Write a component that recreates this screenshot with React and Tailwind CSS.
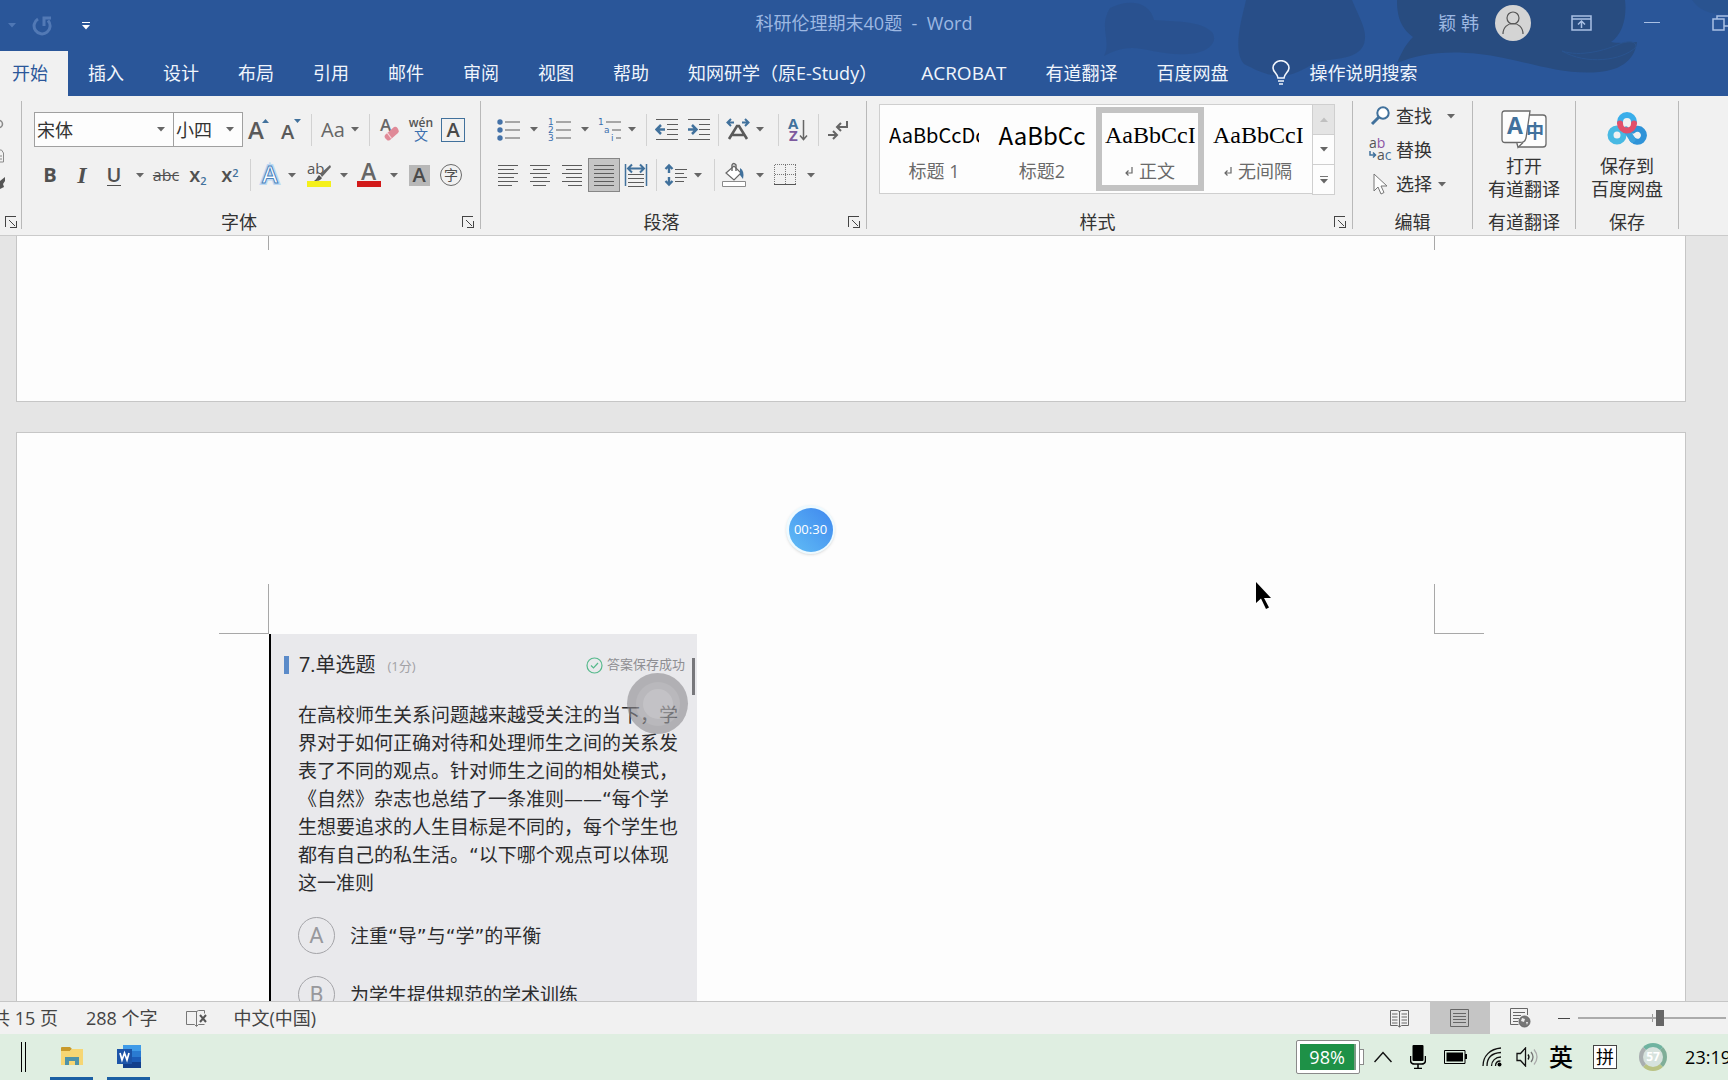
import { useState } from "react";

const tabs = [
  { label: "插入" },
  { label: "设计" },
  { label: "布局" },
  { label: "引用" },
  { label: "邮件" },
  { label: "审阅" },
  { label: "视图" },
  { label: "帮助" },
  { label: "知网研学（原E-Study）", className: "pl-[19px] pr-6" },
  { label: "ACROBAT", className: "px-[19px] text-[19px]" },
  { label: "有道翻译" },
  { label: "百度网盘" },
];

const styles = [
  { name: "标题 1", sample: "AaBbCcDc", look: "font-['Noto_Sans_CJK_SC',sans-serif] text-xl" },
  { name: "标题2", sample: "AaBbCc", look: "font-['Noto_Sans_CJK_SC',sans-serif] text-2xl" },
  { name: "正文", sample: "AaBbCcI", look: "font-['Liberation_Serif',serif] text-2xl", mark: true },
  { name: "无间隔", sample: "AaBbCcI", look: "font-['Liberation_Serif',serif] text-2xl", mark: true },
];

const question = [
  "在高校师生关系问题越来越受关注的当下，学",
  "界对于如何正确对待和处理师生之间的关系发",
  "表了不同的观点。针对师生之间的相处模式，",
  "《自然》杂志也总结了一条准则——“每个学",
  "生想要追求的人生目标是不同的，每个学生也",
  "都有自己的私生活。“以下哪个观点可以体现",
  "这一准则",
];

const options = [
  { key: "A", text: "注重“导”与“学”的平衡" },
  { key: "B", text: "为学生提供规范的学术训练" },
];

const Caret = ({ className = "text-[#666]" }) => (
  <svg width="8" height="5" viewBox="0 0 8 5" className={`shrink-0 ${className}`}>
    <path d="M0 0h8L4 4.5z" fill="currentColor" />
  </svg>
);

const Sep = () => (
  <span className="flex w-2 h-8 justify-center shrink-0">
    <span className="w-px h-full bg-[#d2d2d2]" />
  </span>
);

const Tool = ({ label, active, children }) => (
  <button
    type="button"
    aria-label={label}
    className={`flex w-8 h-[34px] shrink-0 items-center justify-center ${
      active ? "border border-[#868686] bg-[#c5c5c5]" : ""
    }`}
  >
    {children}
  </button>
);

// the arrow hugs its icon unless another cell layout is passed
const Drop = ({ label, className = "w-[18px] pl-0.5" }) => (
  <button type="button" aria-label={label} className={`flex h-[34px] shrink-0 items-center ${className}`}>
    <Caret />
  </button>
);

const Launcher = ({ label }) => (
  <button type="button" aria-label={label} className="flex w-6 h-6 shrink-0 items-center justify-center">
    <svg width="12" height="12" viewBox="0 0 12 12" fill="none" stroke="#444" shapeRendering="crispEdges">
      <path d="M.5 11V.5H11" />
      <path d="M4 4l6 6M11.5 5v6.500H5" />
    </svg>
  </button>
);

const Group = ({ name, launcher, className = "", bodyClassName = "", children }) => (
  <section className={`flex flex-col shrink-0 h-[139px] ${className}`}>
    <div className={`flex-1 ${bodyClassName}`}>{children}</div>
    <div className="flex h-[27px] items-center">
      <h2 className="flex-1 text-center text-lg leading-6 text-[#333]">{name}</h2>
      {launcher && <Launcher label={`${name}设置`} />}
    </div>
  </section>
);

const Divider = () => <span className="w-px h-32 mt-[5px] bg-[#b9b9b9] shrink-0" />;

const Lines = ({ rows }) => (
  <svg width="22" height="24" viewBox="0 0 22 24" stroke="#5c5c5c" strokeWidth="1" shapeRendering="crispEdges">
    {rows.map(([a, b], i) => (
      <path key={i} d={`M${a} ${i * 4 + 2.5}H${b}`} />
    ))}
  </svg>
);

const Combo = ({ label, value, className }) => (
  <label className={`flex h-[35px] items-center bg-[#fdfdfd] border border-[#a0a0a0] pr-2 shrink-0 ${className}`}>
    <span className="sr-only">{label}</span>
    <select
      defaultValue={value}
      className="appearance-none flex-1 min-w-0 h-full pl-0.5 text-lg leading-8 text-[#333] bg-transparent outline-none"
    >
      <option>{value}</option>
    </select>
    <Caret />
  </label>
);

const HeaderArt = () => (
  <svg
    className="absolute right-0 top-0 pointer-events-none"
    width="648"
    height="96"
    viewBox="0 0 648 96"
    fill="#284c80"
  >
    <path d="M30 8C50-2 70 2 74 20c20 2 45 0 58 12 8 12-8 22-24 22-22 2-42-6-56-6-12 0-20 4-28 8 8-16-6-28 6-48z" opacity=".4" />
    <path d="M166 0h106c8 20 16 30 12 44-6 16-30 14-46 18-10 4-20 12-34 14-18 0-28-6-40-12-12-14-2-46 2-64z" opacity=".7" />
    <path d="M317 0h228c2 16-2 34-14 42 12 2 20 0 26 0-2 16-14 28-38 30-40 4-80-14-120-18-34-4-60 0-82 9 6-14 10-20 16-26-14-10-16-24-16-37z" />
    <path d="M482 51c18 6 42 0 60-8 8-2 14-2 14 4-14 14-50 18-74 4z" fill="#284c80" stroke="#2a548f" />
    <path d="M612 0h36v14c-14 2-30-4-36-14z" opacity=".35" />
  </svg>
);

const TitleBar = () => (
  <div className="relative grid grid-cols-[1fr_auto_1fr] h-[51px] items-center text-lg text-[#9db8e2]">
    <div className="flex items-center pl-2">
      <Caret className="text-[#4f77b4]" />
      <button type="button" aria-label="重复" className="ml-4">
        <svg width="20" height="20" viewBox="0 0 20 20" fill="none" stroke="#5279b5" strokeWidth="3">
          <path d="M6 3a8 8 0 1 0 10 1.500" />
          <path d="M12 10V2h7" />
        </svg>
      </button>
      <button type="button" aria-label="自定义快速访问工具栏" className="ml-[30px] flex flex-col items-center gap-0.5">
        <span className="w-2 h-px bg-white" />
        <Caret className="text-white" />
      </button>
    </div>
    <h1 className="whitespace-pre leading-6 -mt-1.5">科研伦理期末40题  -  Word</h1>
    <div className="flex items-center justify-end -mt-1.5 -mr-1 overflow-hidden">
      <span className="leading-6">颖 韩</span>
      <svg className="ml-4" width="36" height="36" viewBox="0 0 36 36">
        <circle cx="18" cy="18" r="18" fill="#d4d4d4" />
        <circle cx="18" cy="13" r="6" fill="none" stroke="#555" strokeWidth="1.200" />
        <path d="M8 29c0-14 20-14 20 0" fill="none" stroke="#555" strokeWidth="1.200" />
      </svg>
      <button type="button" aria-label="功能区显示选项" className="ml-10">
        <svg width="22" height="16" viewBox="0 0 22 16" fill="none" stroke="#a9c0e4" strokeWidth="1.500">
          <path d="M1 1h19v14H1zM1 4h19M10.500 13V6M7 9.500L10.500 6l3.500 3.500" />
        </svg>
      </button>
      <button type="button" aria-label="最小化" className="ml-[51px] w-4 h-4 flex items-center">
        <span className="w-full h-px bg-[#a9c0e4]" />
      </button>
      <button type="button" aria-label="向下还原" className="ml-[52px]">
        <svg width="20" height="16" viewBox="0 0 20 16" fill="none" stroke="#a9c0e4" strokeWidth="1.500">
          <path d="M1 4h11v11H1zM5 4V1h12v10h-5" />
        </svg>
      </button>
    </div>
  </div>
);

const TabBar = () => (
  <nav className="relative flex gap-px h-[45px] text-lg leading-6 text-[#f0f5fc] whitespace-nowrap">
    <button type="button" className="w-[68px] pl-3 pb-0.5 text-left bg-[#f1f1f1] text-[#2b579a]">
      开始
    </button>
    {tabs.map((t) => (
      <button type="button" key={t.label} className={`pb-0.5 ${t.className || "px-[19px]"}`}>
        {t.label}
      </button>
    ))}
    <button type="button" className="flex items-center gap-[19px] pl-6 pb-0.5">
      <svg width="18" height="25" viewBox="0 0 18 25" fill="none" stroke="#f0f5fc" strokeWidth="1.600">
        <path d="M6 18c0-4-5-6-5-10a8 7.300 0 0 1 16 0c0 4-5 6-5 10z" />
        <path d="M6 21h6M7 24h4" />
      </svg>
      操作说明搜索
    </button>
  </nav>
);

const ClipboardGroup = () => (
  <section className="flex flex-col w-[21px] h-[139px] shrink-0 overflow-hidden">
    <div className="flex-1 pt-5">
      <svg width="6" height="80" viewBox="0 0 6 80" fill="none" stroke="#8a8a8a">
        <circle cx="-1" cy="8" r="3.500" strokeWidth="1.500" />
        <path d="M0 34h1.500l2 3v9H0M0 40h2M0 43h2" />
        <path d="M0 65l5-4v4l-2 3 1 3-4 2z" fill="#555" stroke="none" />
      </svg>
    </div>
    <div className="flex h-[27px] items-center justify-center">
      <Launcher label="剪贴板设置" />
    </div>
  </section>
);

const FontGroup = () => (
  <Group name="字体" launcher className="w-[458px]" bodyClassName="pl-3">
    <div className="flex h-[35px] mt-4 items-center">
      <Combo label="字体" value="宋体" className="w-[140px]" />
      <Combo label="字号" value="小四" className="w-[70px] -ml-px" />
      <Tool label="增大字号">
        <svg width="24" height="26" viewBox="0 0 24 26">
          <text x="1" y="22" fontSize="24" fontWeight="600" fill="#5a5a5a" fontFamily="Open Sans">A</text>
          <path d="M15 6l3.500-4L22 6z" fill="#41719c" />
        </svg>
      </Tool>
      <Tool label="减小字号">
        <svg width="24" height="26" viewBox="0 0 24 26">
          <text x="2" y="22" fontSize="20" fontWeight="600" fill="#5a5a5a" fontFamily="Open Sans">A</text>
          <path d="M15 2l3.500 4L22 2z" fill="#41719c" />
        </svg>
      </Tool>
      <Sep />
      <button type="button" aria-label="更改大小写" className="flex w-[50px] items-center justify-center gap-1.5 text-xl text-[#666]">
        Aa
        <Caret />
      </button>
      <Sep />
      <Tool label="清除所有格式">
        <svg width="24" height="24" viewBox="0 0 24 24">
          <text x="3" y="13" fontSize="17" fontWeight="600" fill="#666" fontFamily="Open Sans">A</text>
          <path d="M8 17l9-8q2-1 3.500 1l1 2q1 1.500-.5 3l-8 7q-2 1-3 0l-2-2q-1-1.500 0-3z" fill="#e08a98" />
          <path d="M10 14.500l4.500 6" stroke="#f6d6da" strokeWidth="1.200" />
        </svg>
      </Tool>
      <Tool label="拼音指南">
        <span className="flex flex-col items-center text-[#555] text-xs leading-3">
          <span className="font-semibold leading-[10px]">wén</span>
          <span className="text-sm leading-[14px] text-[#3a6fae]">文</span>
        </span>
      </Tool>
      <Tool label="字符边框">
        <span className="flex w-6 h-6 items-center justify-center border border-[#41719c] text-xl font-semibold text-[#4a4a4a]">
          A
        </span>
      </Tool>
    </div>
    <div className="flex h-[34px] mt-[11px] items-center text-[#505050]">
      <Tool label="加粗">
        <b className="text-xl">B</b>
      </Tool>
      <Tool label="倾斜">
        <i className="font-['Liberation_Serif',serif] text-2xl font-bold">I</i>
      </Tool>
      <Tool label="下划线">
        <span className="text-xl font-semibold leading-5 border-b border-[#505050]">U</span>
      </Tool>
      <Drop label="下划线样式" className="w-5 justify-center" />
      <Tool label="删除线">
        <s className="text-base">abc</s>
      </Tool>
      <Tool label="下标">
        <span className="text-xl leading-6 font-semibold">
          x<sub className="text-[11px] text-[#41719c]">2</sub>
        </span>
      </Tool>
      <Tool label="上标">
        <span className="text-xl leading-6 font-semibold">
          x<sup className="text-[11px] text-[#41719c]">2</sup>
        </span>
      </Tool>
      <Sep />
      <Tool label="文本效果">
        <svg width="24" height="26" viewBox="0 0 24 26">
          <text x="4" y="21" fontSize="24" fontWeight="600" fill="#fff" stroke="#bcd8f2" strokeWidth="4" fontFamily="Open Sans">A</text>
          <text x="4" y="21" fontSize="24" fontWeight="600" fill="#fff" stroke="#4a83bd" fontFamily="Open Sans">A</text>
        </svg>
      </Tool>
      <Drop label="文本效果选项" className="w-[17px] pl-0.5" />
      <Tool label="突出显示">
        <svg width="26" height="26" viewBox="0 0 26 26">
          <text x="1" y="12" fontSize="15" fill="#555" fontFamily="Open Sans">ab</text>
          <path d="M24 3l-10 9 2 3L25 5z" fill="#666" />
          <path d="M13 13l3 3c-2 3-5 3-8 3 3-2 3-4 5-6z" fill="#555" />
          <path d="M1 19h24v6H1z" fill="#f4f01c" />
        </svg>
      </Tool>
      <Drop label="突出显示颜色" className="w-[18px] justify-center" />
      <Tool label="字体颜色">
        <svg width="26" height="26" viewBox="0 0 26 26">
          <text x="5" y="18" fontSize="23" fontWeight="600" fill="#666" fontFamily="Open Sans">A</text>
          <path d="M1 19h24v6H1z" fill="#d21a1a" />
        </svg>
      </Tool>
      <Drop label="选择字体颜色" className="w-[18px] justify-center" />
      <Tool label="字符底纹">
        <span className="flex w-[21px] h-[21px] items-center justify-center bg-[#b8b8b8] text-xl font-semibold text-[#4a4a4a]">
          A
        </span>
      </Tool>
      <Tool label="带圈字符">
        <span className="flex w-[22px] h-[22px] items-center justify-center rounded-full border border-[#6a6a6a] text-sm leading-4">
          字
        </span>
      </Tool>
    </div>
  </Group>
);

const ParagraphGroup = () => (
  <Group name="段落" launcher className="w-[385px]" bodyClassName="pl-[11px]">
    <div className="flex h-[35px] mt-4 items-center">
      <Tool label="项目符号">
        <svg width="23" height="24" viewBox="0 0 23 24" fill="#4472a8">
          <circle cx="3" cy="4" r="2.700" />
          <circle cx="3" cy="12" r="2.700" />
          <circle cx="3" cy="20" r="2.700" />
          <path d="M8 3.500h15v1H8zM8 11.500h15v1H8zM8 19.500h15v1H8z" fill="#5c5c5c" />
        </svg>
      </Tool>
      <Drop label="项目符号库" className="w-[19px] justify-center" />
      <Tool label="编号">
        <svg width="23" height="24" viewBox="0 0 23 24" fontSize="9" fontFamily="DejaVu Sans" fill="#3a6fae">
          <text x="0" y="7">1</text>
          <text x="0" y="15">2</text>
          <text x="0" y="23">3</text>
          <path d="M8 3.500h15v1H8zM8 11.500h15v1H8zM8 19.500h15v1H8z" fill="#5c5c5c" />
        </svg>
      </Tool>
      <Drop label="编号库" className="w-[19px] justify-center" />
      <Tool label="多级列表">
        <svg width="24" height="24" viewBox="0 0 24 24" fontSize="9" fontFamily="DejaVu Sans" fill="#3a6fae">
          <text x="0" y="7">1</text>
          <text x="6" y="15">a</text>
          <text x="13" y="23">i</text>
          <path d="M8 3.500h15v1H8zM14 11.500h9v1h-9zM18 19.500h5v1h-5z" fill="#5c5c5c" />
        </svg>
      </Tool>
      <Drop label="列表库" className="w-4 pl-0.5" />
      <Sep />
      <Tool label="减少缩进量">
        <svg width="23" height="24" viewBox="0 0 23 24" fill="none" stroke="#5c5c5c">
          <path d="M1 1.500h22M12 6.500h11M12 11.500h11M12 16.500h11M1 21.500h22" />
          <path d="M10 11.500H2M6 7l-4.500 4.500L6 16" stroke="#41719c" strokeWidth="2.500" />
        </svg>
      </Tool>
      <Tool label="增加缩进量">
        <svg width="23" height="24" viewBox="0 0 23 24" fill="none" stroke="#5c5c5c">
          <path d="M1 1.500h22M12 6.500h11M12 11.500h11M12 16.500h11M1 21.500h22" />
          <path d="M1 11.500h8M5 7l4.500 4.500L5 16" stroke="#41719c" strokeWidth="2.500" />
        </svg>
      </Tool>
      <Sep />
      <Tool label="中文版式">
        <svg width="24" height="24" viewBox="0 0 24 24" fill="none" stroke="#41719c" strokeWidth="2">
          <path d="M8 4.500H2M5 1L1.500 4.500 5 8M16 4.500h6M19 1l3.500 3.500L19 8" />
          <path d="M3 21L11 8h2l8 13M6 17h12" stroke="#5a5a5a" strokeWidth="2.600" />
        </svg>
      </Tool>
      <Drop label="版式选项" className="w-5 pl-0.5" />
      <Sep />
      <Tool label="排序">
        <svg width="22" height="26" viewBox="0 0 22 26" fontSize="15" fontWeight="700" fontFamily="Open Sans">
          <text x="1" y="12" fill="#41719c">A</text>
          <text x="2" y="24" fill="#7d5a9e">Z</text>
          <path d="M16.500 3v19M13 18.500l3.500 4 3.500-4" stroke="#666" strokeWidth="1.500" fill="none" />
        </svg>
      </Tool>
      <Sep />
      <Tool label="显示编辑标记">
        <svg width="22" height="22" viewBox="0 0 22 22" fill="none" stroke="#666" strokeWidth="2">
          <path d="M20 2v6h-9M14 4l-4 4 4 4" />
          <path d="M1 16h9M6 12l4 4-4 4" />
        </svg>
      </Tool>
    </div>
    <div className="flex h-[34px] mt-[11px] items-center">
      <Tool label="左对齐">
        <Lines rows={[[1, 21], [1, 17], [1, 21], [1, 17], [1, 21], [1, 15]]} />
      </Tool>
      <Tool label="居中">
        <Lines rows={[[1, 21], [4, 18], [1, 21], [4, 18], [1, 21], [4, 17]]} />
      </Tool>
      <Tool label="右对齐">
        <Lines rows={[[1, 21], [5, 21], [1, 21], [5, 21], [1, 21], [7, 21]]} />
      </Tool>
      <Tool label="两端对齐" active>
        <Lines rows={[[1, 21], [1, 21], [1, 21], [1, 21], [1, 21], [1, 21]]} />
      </Tool>
      <Tool label="分散对齐">
        <svg width="24" height="24" viewBox="0 0 24 24" fill="none" stroke="#41719c" strokeWidth="1.500">
          <path d="M1.500 1v22M22.500 1v22" />
          <path d="M4 5.500h16M8 1.500l-4 4 4 4M16 1.500l4 4-4 4" strokeWidth="2" />
          <path d="M4 11.500h16M4 15.500h16M4 19.500h16M4 23.500h16" stroke="#5c5c5c" strokeWidth="1" />
        </svg>
      </Tool>
      <Sep />
      <Tool label="行和段落间距">
        <svg width="24" height="24" viewBox="0 0 24 24" fill="none" stroke="#41719c" strokeWidth="2.400">
          <path d="M5 10V2.500M1.500 6L5 2.500 8.500 6M5 14v7.500M1.500 18L5 21.500 8.500 18" />
          <path d="M11 6.500h12M11 10.500h9M11 14.500h12M11 18.500h9" stroke="#5c5c5c" strokeWidth="1" />
        </svg>
      </Tool>
      <Drop label="间距选项" />
      <Sep />
      <Tool label="底纹">
        <svg width="26" height="26" viewBox="0 0 26 26" fill="none" stroke="#666">
          <path d="M5 11l8-7 7 7-7 7z" fill="#fff" strokeWidth="1.200" />
          <path d="M11 9V3q1.500-3 4 0v6" strokeWidth="1.400" />
          <path d="M19 6q5 3 3 11l-3-4z" fill="#41719c" stroke="none" />
          <path d="M1.500 19.500h23v5h-23z" fill="#fff" stroke="#8a8a8a" />
        </svg>
      </Tool>
      <Drop label="底纹颜色" className="w-[19px] justify-center" />
      <Tool label="边框">
        <svg width="22" height="24" viewBox="0 0 22 24" fill="none" stroke="#777" shapeRendering="crispEdges">
          <path d="M.5 1.500h21M.5 1.500v20M21.500 1.500v20M11.500 1.500v20M.5 11.500h21" strokeDasharray="1 1" />
          <path d="M0 21.500h22" stroke="#555" />
        </svg>
      </Tool>
      <Drop label="边框选项" className="w-5 justify-center" />
    </div>
  </Group>
);

const StylesGroup = () => {
  const [selected, setSelected] = useState("正文");

  return (
    <Group name="样式" launcher className="w-[485px]">
      <div className="flex mt-2 ml-3">
        <div className="flex h-[90px] items-center bg-[#fdfdfd] border border-r-0 border-[#cfcfcf]">
          {styles.map((s) => (
            <button
              type="button"
              key={s.name}
              onClick={() => setSelected(s.name)}
              className={`flex flex-col w-[108px] h-[84px] border-[6px] px-[3px] pt-0.5 ${
                selected === s.name ? "border-[#c3c3c3]" : "border-transparent"
              }`}
            >
              <span className={`w-full overflow-hidden whitespace-nowrap text-black ${s.look}`}>
                <span className="block h-[42px] leading-10">{s.sample}</span>
              </span>
              <span className="flex w-full items-center justify-center gap-1.5 text-lg leading-7 text-[#6a6a6a]">
                {s.mark && (
                  <svg width="8" height="9" viewBox="0 0 8 9" fill="none" stroke="#666" strokeWidth="1.200">
                    <path d="M7 0v6H1M3.500 3.500L1 6l2.500 2.500" />
                  </svg>
                )}
                {s.name}
              </span>
            </button>
          ))}
        </div>
        <div className="flex flex-col w-[23px] h-[91px] border border-[#cfcfcf] bg-[#fdfdfd] divide-y divide-[#cfcfcf]">
          <button type="button" aria-label="上一行" className="flex flex-1 items-center justify-center bg-[#e4e4e4]">
            <Caret className="rotate-180 text-[#c0c0c0]" />
          </button>
          <button type="button" aria-label="下一行" className="flex flex-1 items-center justify-center">
            <Caret />
          </button>
          <button type="button" aria-label="其他样式" className="flex flex-col flex-1 gap-0.5 items-center justify-center">
            <span className="w-2 h-px bg-[#777]" />
            <Caret />
          </button>
        </div>
      </div>
    </Group>
  );
};

const EditGroup = () => (
  <Group name="编辑" className="w-[119px]">
    <div className="flex flex-col mt-[3px] pl-4 text-lg leading-6 text-[#333]">
      <button type="button" className="flex h-[34px] items-center">
        <svg width="22" height="20" viewBox="0 0 22 20" fill="none" stroke="#41719c" strokeWidth="2">
          <circle cx="14" cy="7" r="5.700" fill="#fff" />
          <path d="M10 11l-7 7" strokeWidth="3" />
        </svg>
        <span className="ml-[5px] mr-[15px]">查找</span>
        <Caret />
      </button>
      <button type="button" className="flex h-[34px] items-center">
        <svg width="24" height="24" viewBox="0 0 24 24" fontSize="14" fontFamily="Open Sans">
          <text x="0" y="10" fill="#555">a<tspan fill="#8a55a5">b</tspan></text>
          <text x="8" y="22" fill="#555">a<tspan fill="#41719c">c</tspan></text>
          <path d="M1 13v4h5M4 14.500L6.500 17 4 19.500" fill="none" stroke="#41719c" strokeWidth="1.500" />
        </svg>
        <span className="ml-[3px]">替换</span>
      </button>
      <button type="button" className="flex h-[34px] items-center">
        <svg width="22" height="22" viewBox="0 0 22 22">
          <path d="M5 1v17l4-4 3 7 3-1.500-3-6.500h6z" fill="#fdfdfd" stroke="#777" />
        </svg>
        <span className="ml-[5px] mr-1.5">选择</span>
        <Caret />
      </button>
    </div>
  </Group>
);

const BigTool = ({ icon, first, second }) => (
  <button type="button" className="flex flex-col w-full h-full items-center pt-3.5 text-lg leading-6 text-[#333]">
    <span className="flex h-10 items-center mb-1">{icon}</span>
    <span>{first}</span>
    <span className="-mt-px">{second}</span>
  </button>
);

const YoudaoIcon = () => (
  <svg width="46" height="40" viewBox="0 0 46 40" fill="#fdfdfd" stroke="#6a6a6a" strokeWidth="1.300">
    <path d="M20 5h22q3 0 3 3v26q0 3-3 3H18l-2-4 8-4z" />
    <path d="M3.500 1H29l-4 27q-1 4-4 4.500H4q-3 0-3-3V4q0-3 2.500-3z" />
    <path d="M16 33.500l1 4 5-5" />
    <g stroke="none" fill="#41719c" fontFamily="Open Sans" fontWeight="700">
      <text x="6" y="24" fontSize="23">A</text>
      <text x="25" y="28" fontSize="18" fontFamily="Noto Sans CJK SC">中</text>
    </g>
  </svg>
);

const BaiduIcon = () => (
  <svg width="40" height="36" viewBox="0 0 40 36" fill="none" strokeWidth="6" strokeLinecap="round">
    <circle cx="10" cy="23" r="6.500" stroke="#48b9e3" />
    <path d="M26 18.500a6.500 6.500 0 1 1-.5 9" stroke="#2f93d8" />
    <path d="M25.500 27.500L19 17.500" stroke="#3aa2dd" />
    <path d="M13 10a7 7 0 0 1 14 0" stroke="#3aaeea" />
    <path d="M13 11.500a7 7 0 0 0 14 0" stroke="#e2506a" />
  </svg>
);

const Ribbon = () => (
  <div className="flex bg-[#f1f1f1] border-b border-[#cbcbcb] overflow-hidden shrink-0">
    <ClipboardGroup />
    <Divider />
    <FontGroup />
    <Divider />
    <ParagraphGroup />
    <Divider />
    <StylesGroup />
    <Divider />
    <EditGroup />
    <Divider />
    <Group name="有道翻译" className="w-[102px]">
      <BigTool icon={<YoudaoIcon />} first="打开" second="有道翻译" />
    </Group>
    <Divider />
    <Group name="保存" className="w-[102px]">
      <BigTool icon={<BaiduIcon />} first="保存到" second="百度网盘" />
    </Group>
    <Divider />
  </div>
);

const QuestionCard = () => (
  <article className="relative w-[428px] ml-[252px] pt-[19px] pl-[27px] bg-[#e9e9ec] border-l-2 border-black text-[#2c2c2e]">
    <header className="flex h-6 items-center -ml-3.5 pr-3">
      <span className="w-[5px] h-[18px] mr-2.5 bg-[#5b8bc9]" />
      <h3 className="text-xl leading-6 font-['Roboto','Noto_Sans_CJK_SC',sans-serif]">7.单选题</h3>
      <span className="ml-3 mt-1 text-[13px] text-[#a2a2a6]">(1分)</span>
      <span className="flex ml-auto items-center gap-1 text-[13px] text-[#8e8e92]">
        <svg width="17" height="17" viewBox="0 0 17 17" fill="none" stroke="#56b98c" strokeWidth="1.200">
          <circle cx="8.500" cy="8.500" r="7.500" />
          <path d="M5 8.500l2.500 2.500L12 6" />
        </svg>
        答案保存成功
      </span>
    </header>
    <p className="mt-6 text-[19px] leading-7 whitespace-nowrap font-['DejaVu_Sans','Noto_Sans_CJK_SC',sans-serif]">
      {question.map((line) => (
        <span key={line} className="block">
          {line}
        </span>
      ))}
    </p>
    <div className="flex flex-col mt-5 gap-[22px]">
      {options.map((o) => (
        <label key={o.key} className="flex items-center gap-[15px]">
          <input type="radio" name="answer" value={o.key} className="sr-only" />
          <span className="flex w-[37px] h-[37px] items-center justify-center rounded-full border border-[#a4a4a8] text-[22px] text-[#98989c] font-['Roboto',sans-serif]">
            {o.key}
          </span>
          <span className="text-[19px] leading-7 font-['DejaVu_Sans','Noto_Sans_CJK_SC',sans-serif]">{o.text}</span>
        </label>
      ))}
    </div>
    <span className="absolute right-[2px] top-6 w-[3px] h-[37px] bg-[#77777b]" />
    <span className="absolute right-[9px] top-[39px] flex w-[61px] h-[61px] items-center justify-center rounded-full bg-[#8c8a8f]/60">
      <span className="flex w-11 h-11 items-center justify-center rounded-full bg-white/10">
        <span className="w-[30px] h-[30px] rounded-full bg-white/15" />
      </span>
    </span>
  </article>
);

const Document = () => (
  <main className="relative flex-1 min-h-0 overflow-hidden bg-[#e5e5e5] pl-4 pr-[42px]">
    <div className="h-[166px] bg-[#fdfdfd] border border-t-0 border-[#c6c6c6]">
      <div className="h-3.5 ml-[251px] mr-[250px] border-x border-[#a8a8a8]" />
    </div>
    <div className="mt-[30px] h-[640px] bg-[#fdfdfd] border border-[#c6c6c6]">
      <div className="flex justify-between mt-[151px] pl-[202px] pr-[201px]">
        <span className="w-[50px] h-[50px] border-r border-b border-[#a8a8a8]" />
        <span className="w-[50px] h-[50px] border-l border-b border-[#a8a8a8]" />
      </div>
      <QuestionCard />
    </div>

    <div className="absolute left-[786px] top-[269px] flex w-[49px] h-[49px] items-center justify-center rounded-full bg-[#eefaff] shadow">
      <div className="flex w-11 h-11 items-center justify-center rounded-full bg-linear-to-tr from-[#62bdf5] to-[#4087ee] text-[13px] text-white">
        00:30
      </div>
    </div>
    <svg className="absolute left-[1256px] top-[346px]" width="16" height="28" viewBox="0 0 16 28">
      <path d="M0 0v21l5-4.500 5 10.500 3-1.500-5-9.500h7z" fill="#000" />
    </svg>
  </main>
);

const StatusBar = () => {
  const [zoom, setZoom] = useState(56);

  return (
    <footer className="flex h-[33px] shrink-0 items-center bg-[#f1f1f1] border-t border-[#c6c6c6] text-lg leading-6 text-[#444] whitespace-nowrap overflow-hidden">
      <span className="-ml-2">共 15 页</span>
      <span className="ml-7">288 个字</span>
      <svg className="ml-7" width="22" height="18" viewBox="0 0 22 18" fill="none" stroke="#777">
        <path d="M10.500 2.500H.5v13h8l2 2 2-2h6M10.500 2v15M10.500 2.500l2-1h6v3" />
        <path d="M14 6l6 7M20 6l-6 7" stroke="#555" strokeWidth="2" />
      </svg>
      <span className="ml-[26px]">中文(中国)</span>

      <div className="flex ml-auto items-center h-full">
        <button type="button" aria-label="阅读视图" className="flex w-[60px] items-center justify-center">
          <svg width="20" height="19" viewBox="0 0 20 19" fill="none" stroke="#666">
            <path d="M9.500 2.500l-2-1h-7v15h7l2 1.500 2-1.500h7v-15h-7zM9.500 2v16" />
            <path d="M2 5h5.500M2 8h5.500M2 11h5.500M2 14h5.500M11.500 5H17M11.500 8H17M11.500 11H17M11.500 14H17" />
          </svg>
        </button>
        <button type="button" aria-label="页面视图" className="flex w-[60px] h-full items-center justify-center bg-[#c5c5c5]">
          <svg width="20" height="19" viewBox="0 0 20 19" fill="none" stroke="#666">
            <path d="M.5.5h18v17H.5zM3 4.500h13M3 7.500h13M3 10.500h13M3 13.500h13" />
          </svg>
        </button>
        <button type="button" aria-label="Web 版式视图" className="flex w-[60px] items-center justify-center">
          <svg width="21" height="20" viewBox="0 0 21 20" fill="none" stroke="#666">
            <path d="M17.500 7V.5H.5v16h8M3 4.500h12M3 7.500h8M3 10.500h6M3 13.500h5" />
            <circle cx="14.500" cy="13.500" r="5.500" fill="#777" />
            <path d="M12 10l3 1-1 3-3-1zM16 14l2 0-1 3z" fill="#eee" stroke="none" />
          </svg>
        </button>
        <button type="button" aria-label="缩小" className="flex ml-2 w-3 h-6 items-center">
          <span className="w-full h-px bg-[#444]" />
        </button>
        <div className="relative flex items-center w-[148px] ml-2 mr-0.5">
          <span className="absolute left-[74px] top-1 w-px h-2 bg-[#9a9a9a]" />
          <input
            type="range"
            aria-label="显示比例"
            value={zoom}
            onChange={(e) => setZoom(Number(e.target.value))}
            className="relative w-full h-4 appearance-none bg-transparent [&::-webkit-slider-runnable-track]:h-0.5 [&::-webkit-slider-runnable-track]:bg-[#ababab] [&::-webkit-slider-thumb]:appearance-none [&::-webkit-slider-thumb]:w-2 [&::-webkit-slider-thumb]:h-4 [&::-webkit-slider-thumb]:-mt-[7px] [&::-webkit-slider-thumb]:bg-[#666]"
          />
        </div>
      </div>
    </footer>
  );
};

const Taskbar = () => (
  <div className="flex h-[46px] shrink-0 items-center bg-[#dfeee1] text-black whitespace-nowrap overflow-hidden">
    <span className="ml-[21px] w-[5px] h-[30px] border-x border-black" />
    <button type="button" aria-label="文件资源管理器" className="flex flex-col w-[43px] h-full ml-6 items-center justify-between pt-3">
      <svg width="22" height="20" viewBox="0 0 22 20">
        <path d="M0 2q0-1 1-1h8l2 2-2 2H0z" fill="#c99a2c" />
        <path d="M0 5h9l2-2h11v16H0z" fill="#f6d673" />
        <path d="M4 19v-8h14v8h-4v-4H8v4z" fill="#4f93a8" />
      </svg>
      <span className="w-full h-[3px] bg-[#1b5fa3]" />
    </button>
    <button type="button" aria-label="Word" className="flex flex-col w-[43px] h-full ml-3.5 items-center justify-between pt-[11px]">
      <svg width="24" height="23" viewBox="0 0 24 23">
        <path d="M6 0h18v6H6z" fill="#3f9be8" />
        <path d="M6 6h18v6H6z" fill="#2a7bd2" />
        <path d="M6 12h18v5H6z" fill="#1b5cb8" />
        <path d="M6 17h18v6H6z" fill="#123f8c" />
        <path d="M0 4h15v15H0z" fill="#1c54a8" />
        <path d="M3 8l2 7 2.500-7L10 15l2-7" fill="none" stroke="#fff" strokeWidth="1.700" />
      </svg>
      <span className="w-full h-[3px] bg-[#1b5fa3]" />
    </button>

    <div className="flex ml-auto -mr-[3px] items-center shrink-0">
      <div className="flex items-center">
        <span className="flex w-16 h-[34px] p-[3px] rounded-xs border border-[#8a8a8a] bg-white">
          <span className="flex-1 text-center text-lg leading-[26px] text-white bg-[#1e9147] border-r-2 border-[#7c9a84]">
            98%
          </span>
        </span>
        <span className="w-1 h-4 border border-l-0 border-[#8a8a8a] bg-white" />
      </div>
      <svg className="ml-2.5" width="18" height="12" viewBox="0 0 18 12" fill="none" stroke="#111" strokeWidth="1.500">
        <path d="M.5 11L9 1.500 17.500 11" />
      </svg>
      <svg className="ml-[18px]" width="16" height="24" viewBox="0 0 16 24">
        <rect x="2.500" y="0" width="11" height="16" rx="1" />
        <path d="M.5 11v4q0 4 4 4h7q4 0 4-4v-4M8 19v4M4 23.500h8" fill="none" stroke="#000" strokeWidth="1.500" />
      </svg>
      <svg className="ml-[18px]" width="24" height="14" viewBox="0 0 24 14">
        <path d="M.5.5h20.500v13H.5z" fill="none" stroke="#000" />
        <path d="M2.500 2.500h16.500v9H2.500zM21 4h2v5h-2z" />
      </svg>
      <svg className="ml-3.5" width="20" height="20" viewBox="0 0 20 20" fill="none" stroke="#111" strokeWidth="1.300">
        <path d="M1 19C1 9 8 2 19 1M5 19C5 11 10 6 19 5.500M9.500 19c0-5 4-9 9.500-9M13.500 19c0-3 2-5 5-5" />
        <circle cx="17.500" cy="17.500" r="2" fill="#000" stroke="none" />
      </svg>
      <svg className="ml-3.5" width="22" height="20" viewBox="0 0 22 20" fill="none" stroke="#111" strokeWidth="1.300">
        <path d="M1 6.500h3.500L9.500 1v18L4.500 13.500H1z" />
        <path d="M12 7.500q2 2.500 0 5" />
        <path d="M15 5q4 5 0 10" stroke="#777" />
        <path d="M18 2.500q6 7.500 0 15" stroke="#aaa" />
      </svg>
      <span className="ml-[11px] text-2xl leading-8 font-medium">英</span>
      <span className="flex w-6 h-6 ml-5 items-center justify-center bg-white border border-[#444] text-lg leading-6">
        拼
      </span>
      <span className="flex w-7 h-7 ml-[22px] items-center justify-center rounded-full border-4 border-t-[#6fb3a0] border-l-[#a9aeb0] border-r-[#7fae98] border-b-[#b9c283] bg-[#d6e2dd] text-xs font-bold text-white">
        57
      </span>
      <time className="ml-[18px] text-lg leading-6">23:19</time>
    </div>
  </div>
);

const App = () => {
  return (
    <div
      lang="zh-CN"
      className="flex flex-col h-screen overflow-hidden font-['Open_Sans','Noto_Sans_CJK_SC',sans-serif]"
    >
      <div className="relative bg-[#2a5699] shrink-0 overflow-hidden">
        <HeaderArt />
        <TitleBar />
        <TabBar />
      </div>
      <Ribbon />
      <Document />
      <StatusBar />
      <Taskbar />
    </div>
  );
};

export default App;
